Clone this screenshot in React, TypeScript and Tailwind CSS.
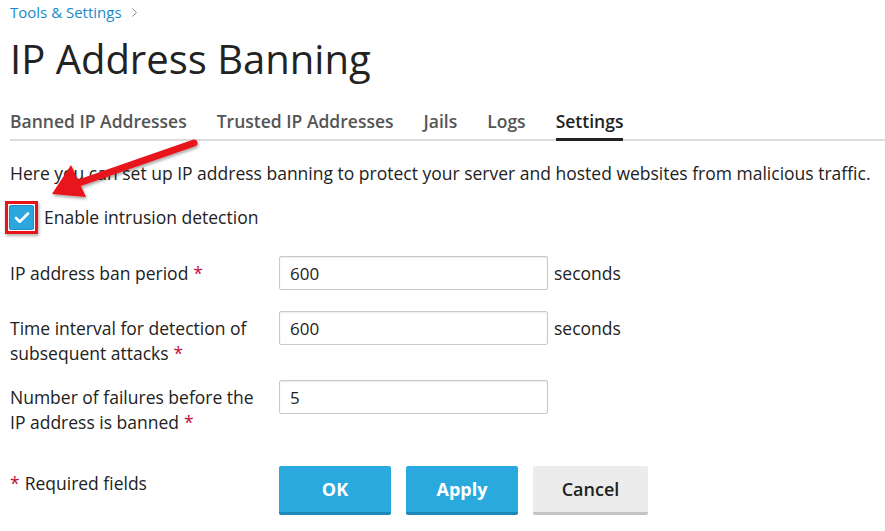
import { Check, ChevronRight } from 'lucide-react';

const font = { fontFamily: '"Open Sans", "Noto Sans", sans-serif' };

function Req() {
  return <span className="ml-[5px] text-[#c0103a]">*</span>;
}

function Field({ label, value, unit }: { label: React.ReactNode; value: string; unit?: string }) {
  return (
    <div className="flex items-start">
      <div className="w-[269px] pt-[5px] pr-3 text-[17.5px] leading-[25px] text-[#222]">{label}</div>
      <input
        readOnly
        value={value}
        className="h-[34px] w-[269px] rounded-[2px] border border-[#c9c9c9] bg-white px-[10px] text-[17px] text-[#222] outline-none shadow-[inset_0_1px_2px_rgba(0,0,0,0.08)]"
      />
      {unit && <span className="ml-[6px] pt-[5px] text-[17.5px] leading-[25px] text-[#222]">{unit}</span>}
    </div>
  );
}

export default function App() {
  const tabs = ['Banned IP Addresses', 'Trusted IP Addresses', 'Jails', 'Logs', 'Settings'];
  return (
    <div className="relative h-[531px] w-[885px] overflow-hidden bg-white pl-[10px]" style={font}>
      <div className="flex items-center gap-[5px] pt-[1px] text-[15px] leading-[22px] text-[#1a8ac7]">
        Tools &amp; Settings
        <ChevronRight className="h-[15px] w-[15px] text-[#777]" strokeWidth={1.5} />
      </div>

      <h1 className="mt-[8px] text-[40px] leading-[56px] text-[#222] font-normal">IP Address Banning</h1>

      <div className="mt-[22px] flex gap-[30px] border-b-2 border-[#dcdcdc]">
        {tabs.map((t) => (
          <div
            key={t}
            className={
              t === 'Settings'
                ? 'relative pb-[5px] text-[17.5px] leading-[25px] font-semibold text-[#222]'
                : 'pb-[5px] text-[17.5px] leading-[25px] font-semibold text-[#555]'
            }
          >
            {t}
            {t === 'Settings' && <div className="absolute -bottom-[2px] left-0 right-0 h-[3px] bg-[#222]" />}
          </div>
        ))}
      </div>

      <p className="mt-[20px] text-[17.5px] leading-[25px] text-[#222] whitespace-nowrap">
        Here you can set up IP address banning to protect your server and hosted websites from malicious traffic.
      </p>

      <div className="mt-[15px] flex items-center">
        <div className="-ml-[5px] flex h-[33px] w-[33px] items-center justify-center border-[3px] border-[#e8131a] shadow-[1px_2px_3px_rgba(0,0,0,0.3)]">
          <div className="flex h-[25px] w-[25px] items-center justify-center rounded-[2px] bg-[#2ba6de] border border-[#1e8cc0]">
            <Check className="h-[18px] w-[18px] text-white" strokeWidth={3.5} />
          </div>
        </div>
        <span className="ml-[6px] text-[17.5px] leading-[25px] text-[#222]">Enable intrusion detection</span>
      </div>

      <div className="mt-[22px] flex flex-col">
        <Field label={<>IP address ban period<Req /></>} value="600" unit="seconds" />
        <div className="mt-[21px]">
          <Field label={<>Time interval for detection of subsequent attacks<Req /></>} value="600" unit="seconds" />
        </div>
        <div className="mt-[14px]">
          <Field label={<>Number of failures before the IP address is banned<Req /></>} value="5" />
        </div>
      </div>

      <div className="mt-[31px] flex items-start">
        <div className="w-[269px] pt-[5px] text-[17.5px] leading-[25px] text-[#222]">
          <span className="mr-[5px] text-[#c0103a]">*</span>Required fields
        </div>
        <div className="flex gap-[15px]">
          <button className="h-[49px] w-[112px] rounded-[2px] border-b-[3px] border-[#1e88bb] bg-[#2aa9df] text-[18px] font-bold text-white">OK</button>
          <button className="h-[49px] w-[112px] rounded-[2px] border-b-[3px] border-[#1e88bb] bg-[#2aa9df] text-[18px] font-bold text-white">Apply</button>
          <button className="h-[49px] w-[115px] rounded-[2px] border-b-[3px] border-[#c4c4c4] bg-[#ececec] text-[18px] font-semibold text-[#222]">Cancel</button>
        </div>
      </div>

      <svg className="pointer-events-none absolute left-0 top-0" width="885" height="531">
        <defs>
          <filter id="sh" x="-20%" y="-20%" width="140%" height="140%">
            <feDropShadow dx="1" dy="2" stdDeviation="1.5" floodColor="#000" floodOpacity="0.35" />
          </filter>
        </defs>
        <g filter="url(#sh)">
          <line x1="194" y1="143" x2="76" y2="184" stroke="#e8131a" strokeWidth="7" strokeLinecap="round" />
          <polygon points="52,194 71,165 86,197" fill="#e8131a" />
        </g>
      </svg>
    </div>
  );
}
